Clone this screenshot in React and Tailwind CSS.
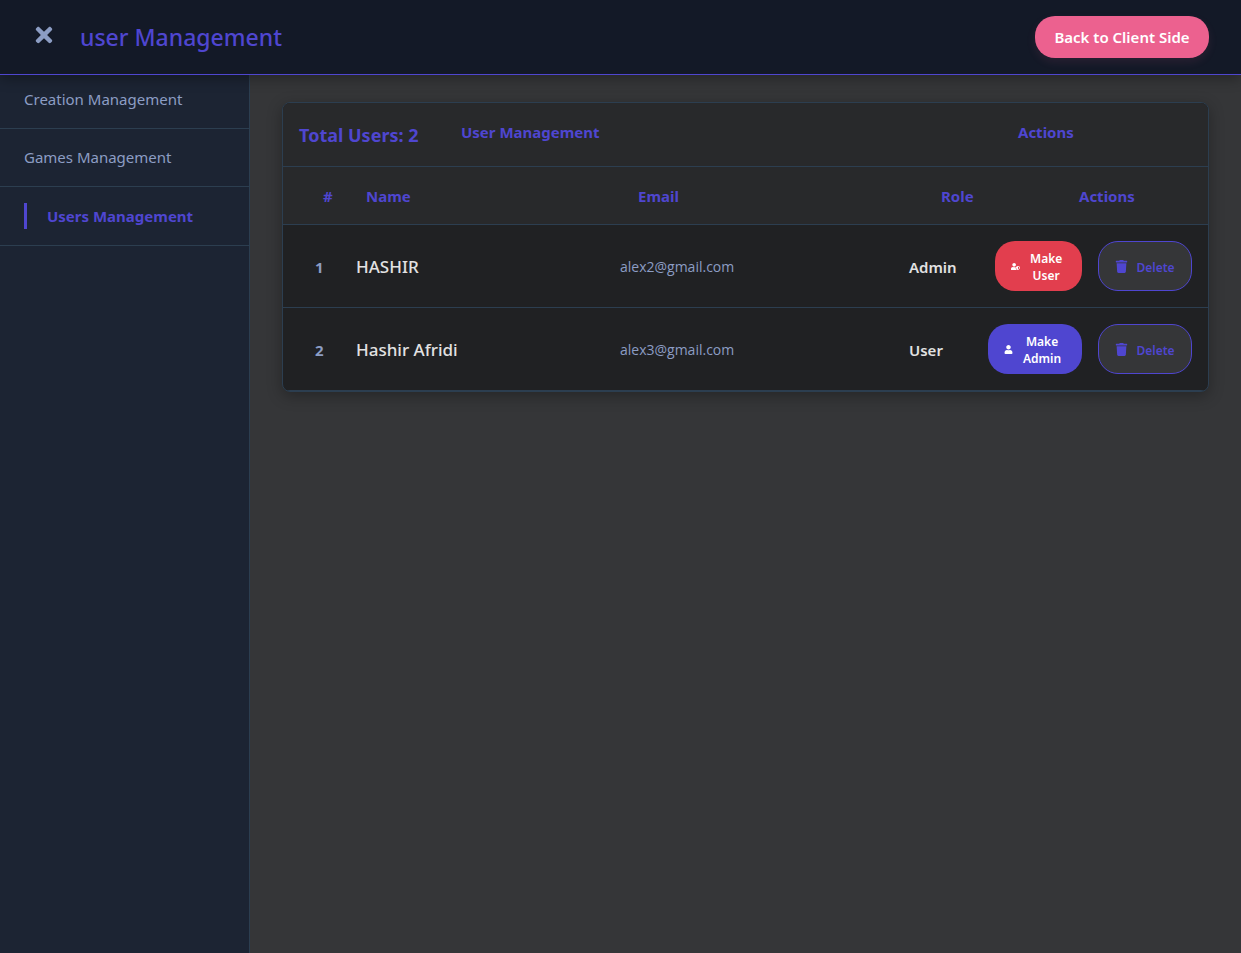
import React from "react";
import { FaTimes, FaTrash, FaUser, FaUserShield } from "react-icons/fa";

const links = ["Creation Management", "Games Management", "Users Management"];

const users = [
  { name: "HASHIR", email: "alex2@gmail.com", role: "Admin" },
  { name: "Hashir Afridi", email: "alex3@gmail.com", role: "User" },
];

function Header() {
  return (
    <header className="relative z-10 flex h-[75px] items-center justify-between border-b border-[#4f46d0] bg-[#131927] px-8 shadow-[0_4px_12px_rgba(0,0,0,0.3)]">
      <div className="flex items-center gap-6">
        <button type="button" aria-label="Close menu" className="flex h-8 w-6 items-start justify-center pt-0.5 text-[#8c9dc4]">
          <FaTimes size={24} />
        </button>
        <h1 className="text-[23px] leading-8 font-medium text-[#4f46d0]">user Management</h1>
      </div>
      <button type="button" className="h-[42px] w-[174px] rounded-[20px] bg-[#ec618f] text-[15px] font-semibold text-white shadow-[0_4px_10px_rgba(236,97,143,0.1)]">
        Back to Client Side
      </button>
    </header>
  );
}

function Sidebar() {
  return (
    <nav className="w-[250px] shrink-0 border-r border-[#2c3e50] bg-[#1c2433]">
      <ul>
        {links.map((label, i) => (
          <li key={label} className={i === 0 ? "border-b border-[#2c3e50] px-6 pt-3 pb-4" : "border-b border-[#2c3e50] px-6 py-4"}>
            <a
              href="#"
              aria-current={i === 2 ? "page" : undefined}
              className={
                i === 2
                  ? "block border-l-[3px] border-[#4f46d0] pl-5 text-[15px] leading-[26px] font-bold text-[#4f46d0]"
                  : "block text-[15px] leading-[25px] text-[#8c9dc4]"
              }
            >
              {label}
            </a>
          </li>
        ))}
      </ul>
    </nav>
  );
}

function RoleButton({ admin }) {
  return (
    <button
      type="button"
      className={
        admin
          ? "flex h-[50px] w-[87px] items-center gap-2.5 rounded-[20px] bg-[#e23e4e] pl-4 text-xs leading-[17px] font-semibold text-white"
          : "flex h-[50px] w-[94px] items-center gap-2.5 rounded-[20px] bg-[#4f46d0] pl-4 text-xs leading-[17px] font-semibold text-white"
      }
    >
      {admin ? <FaUserShield size={9} /> : <FaUser size={9} />}
      <span className="w-min pt-0.5">{admin ? "Make User" : "Make Admin"}</span>
    </button>
  );
}

function UserRow({ user, index }) {
  return (
    <tr>
      <td className="border-b border-[#2c3e50] pt-0.5 pl-8 text-[15px] font-bold text-[#8c9dc4]">{index + 1}</td>
      <td className="border-b border-[#2c3e50] pt-0.5 pl-[17px] text-[17px] font-medium text-[#e2e2e2]">{user.name}</td>
      <td className="border-b border-[#2c3e50] pt-0.5 pl-4 font-['Open_Sans',sans-serif] text-sm text-[#8c9dc4]">{user.email}</td>
      <td className="border-b border-[#2c3e50] pt-0.5 pl-4 text-[15px] font-semibold text-[#e2e2e2]">{user.role}</td>
      <td className="border-b border-[#2c3e50] py-4 pr-4">
        <div className="flex justify-end gap-4">
          <RoleButton admin={user.role === "Admin"} />
          <button type="button" className="flex h-[50px] w-[94px] items-center justify-center gap-2 rounded-[20px] border border-[#4f46d0] bg-[#353638] text-xs font-semibold text-[#4f46d0]">
            <FaTrash size={13} />
            <span className="pt-1">Delete</span>
          </button>
        </div>
      </td>
    </tr>
  );
}

export default function App() {
  return (
    <div className="flex min-h-screen flex-col bg-[#353638] font-['Noto_Sans',sans-serif]">
      <Header />
      <div className="flex flex-1">
        <Sidebar />
        <main className="min-w-0 flex-1 px-8 pt-[27px]">
          <section className="overflow-hidden rounded-lg border border-[#2c3e50] bg-[#202123] shadow-[0_4px_15px_rgba(0,0,0,0.3)]">
            <div className="flex h-16 border-b border-[#2c3e50] bg-[#28292b] px-4 pt-[18px] text-[15px] font-bold text-[#4f46d0]">
              <h2 className="w-[162px] shrink-0 text-lg">Total Users: 2</h2>
              <span className="flex-1">User Management</span>
              <span className="w-[174px] shrink-0">Actions</span>
            </div>
            <table className="w-full table-fixed border-separate border-spacing-0 text-left">
              <colgroup>
                <col className="w-14" />
                <col className="w-[265px]" />
                <col />
                <col className="w-20" />
                <col className="w-[235px]" />
              </colgroup>
              <thead className="bg-[#28292b] text-[15px] font-bold text-[#4f46d0]">
                <tr>
                  <th scope="col" className="h-[58px] border-b border-[#2c3e50] pt-0.5 pl-10">#</th>
                  <th scope="col" className="border-b border-[#2c3e50] pt-0.5 pl-[27px]">Name</th>
                  <th scope="col" className="border-b border-[#2c3e50] pt-0.5 pl-[34px]">Email</th>
                  <th scope="col" className="border-b border-[#2c3e50] pt-0.5 pl-12">Role</th>
                  <th scope="col" className="border-b border-[#2c3e50] pt-0.5 pl-[106px]">Actions</th>
                </tr>
              </thead>
              <tbody>
                {users.map((user, i) => (
                  <UserRow key={user.email} user={user} index={i} />
                ))}
              </tbody>
            </table>
          </section>
        </main>
      </div>
    </div>
  );
}
